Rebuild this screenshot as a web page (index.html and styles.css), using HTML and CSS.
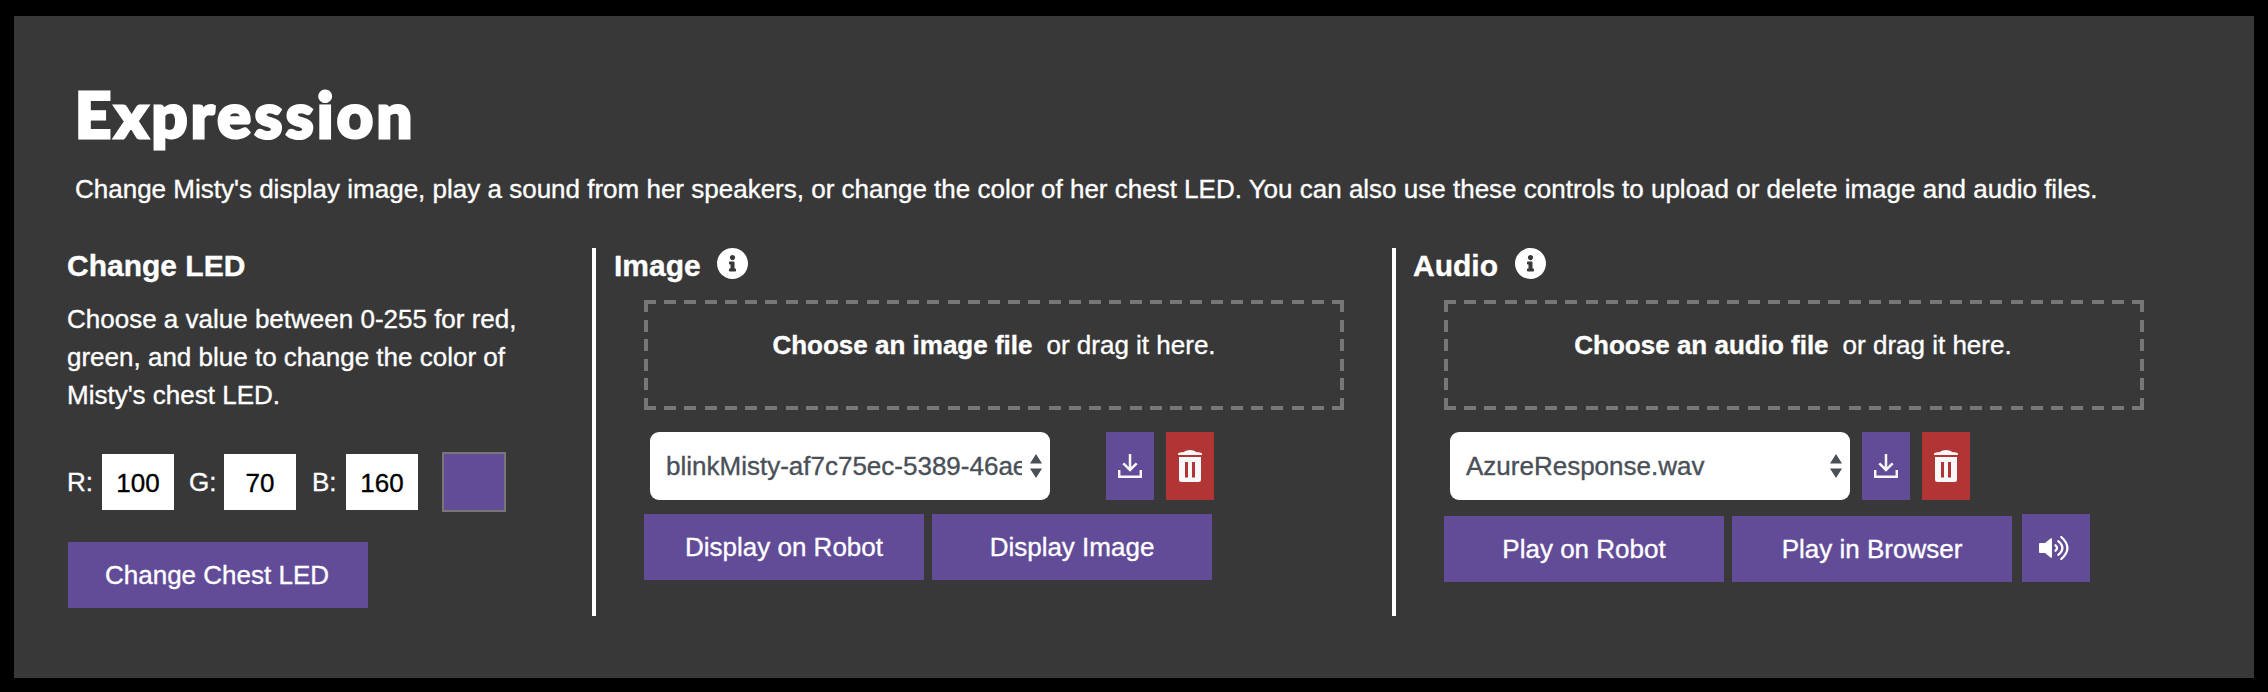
FILE: index.html
```
<!DOCTYPE html>
<html lang="en">
<head>
<meta charset="utf-8">
<title>Expression</title>
<link rel="stylesheet" href="styles.css">
</head>
<body>
<svg class="defs" width="0" height="0" aria-hidden="true">
  <symbol id="info" viewBox="8 8 496 496"><path d="M256 8C119 8 8 119 8 256s111 248 248 248 248-111 248-248S393 8 256 8zm0 110c23.200 0 42 18.800 42 42s-18.800 42-42 42-42-18.800-42-42 18.800-42 42-42zm56 254c0 6.600-5.400 12-12 12h-88c-6.600 0-12-5.400-12-12v-24c0-6.600 5.400-12 12-12h12v-64h-12c-6.600 0-12-5.400-12-12v-24c0-6.600 5.400-12 12-12h64c6.600 0 12 5.400 12 12v100h12c6.600 0 12 5.400 12 12v24z"/></symbol>
  <symbol id="download" viewBox="0 0 24 24"><path d="M12 0v16M5.300 9.300l6.700 6.700 6.700-6.700M1.200 16v6.800h21.600V16" fill="none" stroke="#f8f8fa" stroke-width="2.500"/></symbol>
  <symbol id="trash" viewBox="0 0 24 32"><path fill-rule="evenodd" fill="#f8f8fa" d="M0 5V4Q0 2.700 2 2.500L6 2Q7 .4 9 .4L12 0l3 .4q2 0 3 1.600l4 .5q2 .2 2 1.500v1zM1 7h22v22.500q0 2.500-2.500 2.500h-17Q1 32 1 29.500zm6 5v15.500h3V12zm7 0v15.500h3V12z"/></symbol>
  <symbol id="volume" viewBox="0 0 30 26"><path fill="#fff" d="M1 8h5l5.500-4.500Q13 2.700 13 4v18q0 1.300-1.500.5L6 18H1Q0 18 0 17V9Q0 8 1 8z"/><path fill="none" stroke="#fff" stroke-width="2.300" stroke-linecap="round" d="M16.500 10.300q3.200 2.700 0 5.400M19.300 6.200q8.200 6.800 0 13.600M22.300 2q12.200 11 0 22"/></symbol>
</svg>
<main class="panel">
  <h1 class="title">Expression</h1>
  <p class="intro">Change Misty's display image, play a sound from her speakers, or change the color of her chest LED. You can also use these controls to upload or delete image and audio files.</p>
  <div class="columns">
    <section class="led">
      <h2 class="heading">Change LED</h2>
      <p class="help">Choose a value between 0-255 for red,<br>green, and blue to change the color of<br>Misty's chest LED.</p>
      <div class="rgb">
        <label class="channel">R:</label><span class="value">100</span>
        <label class="channel">G:</label><span class="value">70</span>
        <label class="channel blue">B:</label><span class="value">160</span>
        <span class="swatch"></span>
      </div>
      <div class="btn led-btn">Change Chest LED</div>
    </section>
    <section class="media">
      <h2 class="heading image-heading">Image <svg class="info"><use href="#info"/></svg></h2>
      <div class="drop"><strong>Choose an image file</strong><span>or drag it here.</span></div>
      <div class="files image-files">
        <div class="select"><span class="option">blinkMisty-af7c75ec-5389-46ae</span><svg class="arrows" viewBox="0 0 12 24"><path d="M6 0l6 9.500H0zM0 14.500h12L6 24z"/></svg></div>
        <div class="icon-btn"><svg class="i-down"><use href="#download"/></svg></div>
        <div class="icon-btn danger"><svg class="i-trash"><use href="#trash"/></svg></div>
      </div>
      <div class="actions">
        <div class="btn">Display on Robot</div>
        <div class="btn">Display Image</div>
      </div>
    </section>
    <section class="media">
      <h2 class="heading">Audio <svg class="info"><use href="#info"/></svg></h2>
      <div class="drop audio-drop"><strong>Choose an audio file</strong><span>or drag it here.</span></div>
      <div class="files">
        <div class="select"><span class="option">AzureResponse.wav</span><svg class="arrows" viewBox="0 0 12 24"><path d="M6 0l6 9.500H0zM0 14.500h12L6 24z"/></svg></div>
        <div class="icon-btn"><svg class="i-down"><use href="#download"/></svg></div>
        <div class="icon-btn danger"><svg class="i-trash"><use href="#trash"/></svg></div>
      </div>
      <div class="actions audio-actions">
        <div class="btn">Play on Robot</div>
        <div class="btn">Play in Browser</div>
        <div class="volume"><svg class="i-vol"><use href="#volume"/></svg></div>
      </div>
    </section>
  </div>
</main>
</body>
</html>
```
FILE: styles.css
```
* { box-sizing: border-box; }
body {
  margin: 0;
  padding: 16px 14px 14px;
  height: 692px;
  background: #000;
  color: #fff;
  font: 26px/38px "Liberation Sans", Arial, sans-serif;
  -webkit-text-stroke: 0.35px currentColor;
  white-space: nowrap;
}
h1, h2, p { margin: 0; }
.defs { display: block; height: 0; }
svg { display: block; flex: none; }
.panel { height: 662px; background: #383838; padding: 60px 0 0 54px; }
.title {
  font: 900 63px/75px Lato, sans-serif;
  letter-spacing: 3.4px;
  -webkit-text-stroke: 3px #fff;
  padding-left: 7px;
  height: 94px;
}
.intro { padding-left: 7px; height: 78px; }
.columns { display: grid; grid-template-columns: 524px 800px 800px; height: 368px; }
.heading {
  display: flex;
  gap: 17px;
  font-size: 30px;
  line-height: 36px;
  height: 52px;
}
.info { width: 31px; height: 31px; fill: #fff; }
.help { margin-bottom: 38px; margin-left: -1px; }
.led .heading { margin-left: -1px; }
.rgb { display: flex; align-items: center; height: 60px; }
.channel { width: 35px; margin-left: -1px; }
.blue { margin-left: 0; width: 34px; }
.value {
  width: 72px;
  height: 56px;
  margin-right: 16px;
  line-height: 58px;
  text-align: center;
  background: #fff;
  color: #000;
}
.swatch { width: 64px; height: 60px; margin-left: 8px; border: 2px solid #777; background: #624c98; }
.btn {
  width: 280px;
  height: 66px;
  line-height: 66px;
  text-align: center;
  background: #624c98;
}
.led-btn { width: 300px; margin-top: 30px; padding-right: 2px; }
.media { border-left: 4px solid #fff; padding-left: 48px; }
.media .heading { margin-left: -31px; }
.media .image-heading { margin-left: -30px; gap: 16px; }
.drop {
  --dash-x: repeating-linear-gradient(90deg, #777 0 12px, transparent 12px 20.235px);
  --dash-y: repeating-linear-gradient(180deg, #777 0 12px, transparent 12px 19.6px);
  display: flex;
  justify-content: center;
  gap: 14px;
  width: 700px;
  height: 110px;
  padding-top: 26px;
  background:
    var(--dash-x) top / 100% 4px no-repeat,
    var(--dash-x) bottom / 100% 4px no-repeat,
    var(--dash-y) left / 4px 100% no-repeat,
    var(--dash-y) right / 4px 100% no-repeat;
}
.audio-drop { padding-right: 2px; }
.files { display: flex; gap: 12px; margin: 22px 0 0 6px; height: 68px; }
.image-files .select { margin-right: 44px; }
.select {
  display: flex;
  align-items: center;
  justify-content: space-between;
  width: 400px;
  padding: 0 8px 0 16px;
  border-radius: 9px;
  background: #fff;
  color: #495057;
}
.option { width: 356px; overflow: hidden; }
.arrows { width: 12px; height: 24px; fill: #495057; }
.icon-btn { display: grid; place-items: center; width: 48px; background: #624c98; }
.danger { background: #b13535; }
.i-down { width: 24px; height: 24px; }
.i-trash { width: 24px; height: 32px; }
.actions { display: flex; gap: 8px; margin-top: 14px; }
.audio-actions { align-items: flex-end; }
.volume { display: grid; place-items: center; width: 68px; height: 68px; margin-left: 2px; padding-right: 4px; background: #624c98; }
.i-vol { width: 30px; height: 26px; }
```
